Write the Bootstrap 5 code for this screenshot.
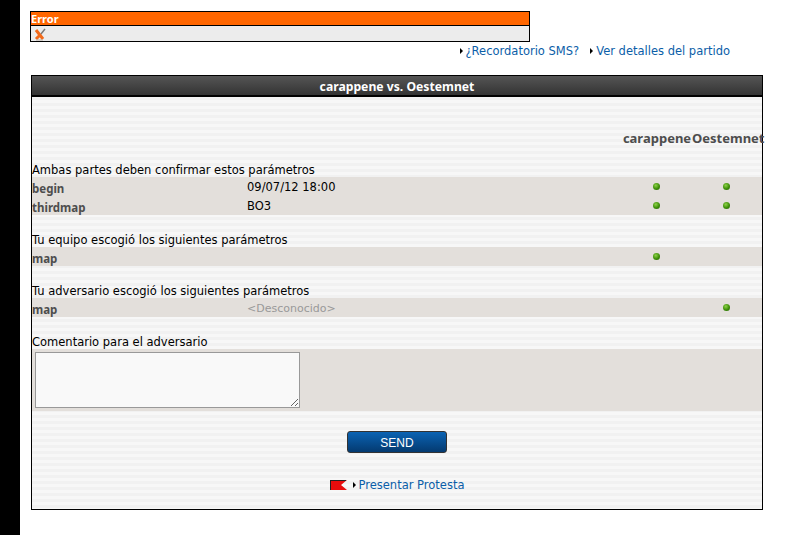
<!DOCTYPE html>
<html lang="es">
<head>
    <meta charset="UTF-8">
    <meta name="viewport" content="width=device-width, initial-scale=1.0">
    <title>carappene vs. Oestemnet</title>
    <link rel="stylesheet" href="https://cdn.jsdelivr.net/npm/bootstrap@5.3.0/dist/css/bootstrap.min.css">
    <style>
        body { background: #fff; font-family: "DejaVu Sans", Verdana, sans-serif; font-size: 11.5px; color: #000; height: 535px; overflow: hidden; }
        a { color: #0b5ea8; text-decoration: none; }
        .side-strip { width: 20px; height: 535px; background: #000; flex: none; }
        .page-body { width: 732px; margin-left: 11px; padding-top: 11px; }
        .err-box { width: 500px; margin-left: -1px; border: 1px solid #000; height: 31px; background: #ececec; }
        .err-head { height: 13px; background: #ff6600; border-bottom: 1px solid #000; box-sizing: content-box; color: #fff; font-family: "Noto Sans", sans-serif; font-weight: 700; font-size: 11px; line-height: 13px; }
        .err-icon { height: 16px; padding-left: 3px; }
        .top-links { height: 33px; padding-right: 33px; font-size: 11.5px; line-height: 18px; gap: 11px; }
        .arrow { display: inline-block; border-left: 3px solid #000; border-top: 3px solid transparent; border-bottom: 3px solid transparent; margin-right: 3px; vertical-align: 1px; }
        .match-box { border: 1px solid #000; height: 435px; background: repeating-linear-gradient(180deg, #f7f7f7 0, #f7f7f7 3px, #f1f1f1 3px, #f1f1f1 6px); }
        .match-title { background: linear-gradient(#555, #333); border-bottom: 2px solid #000; box-sizing: content-box; height: 19px; color: #fff; font-family: "Noto Sans", sans-serif; font-weight: 700; font-size: 12.2px; line-height: 22px; text-align: center; }
        .team-head { height: 63px; align-items: flex-end; color: #4d4d4d; font-family: "Noto Sans", sans-serif; font-weight: 700; font-size: 13px; }
        .team-name { width: 70px; text-align: center; line-height: 18px; padding-bottom: 13px; white-space: nowrap; }
        .sec-label { height: 17px; line-height: 21px; }
        .param-row { height: 19px; background: #e3dfdb; line-height: 18px; }
        .param-name { width: 215px; color: #4d4d4d; font-family: "Noto Sans", sans-serif; font-weight: 700; font-size: 11.5px; padding-top: 3px; }
        .param-val { width: 375px; }
        .param-row .param-val { width: 374px; padding-top: 1px; }
        .param-row .param-val.muted-val { color: #999; font-size: 11px; padding-top: 2px; }
        .dot-cell { width: 70px; }
        .dot { display: block; width: 7px; height: 7px; border-radius: 50%; background: radial-gradient(circle at 40% 35%, #8fd24a, #3d8f08 55%, #25610a); }
        .spacer { height: 15px; }
        .comment-area { height: 62px; background: #e3dfdb; padding: 3px; }
        .comment-area textarea { width: 265px; height: 56px; background: #f9f9f9; border: 1px solid #999; display: block; }
        .send-btn { width: 100px; height: 22px; padding: 2px 0 0; border: 1px solid #333; border-radius: 3px; background: linear-gradient(#0b63b3, #043a70); color: #fff; font-family: "Liberation Sans", Arial, sans-serif; font-size: 12px; line-height: 18px; }
        .send-row { padding-top: 20px; height: 58px; }
        .protest-row { padding-top: 7px; font-size: 11.5px; line-height: 18px; }
        .protest-flag { margin-right: 2px; }
    </style>
</head>
<body class="d-flex">
    <div class="side-strip"></div>
    <div class="page-body">
        <div class="err-box">
            <div class="err-head">Error</div>
            <div class="err-icon">
                <svg width="12" height="13" viewBox="0 0 12 13"><path d="M2 2 L9 11 M2 11 L7 6" stroke="#f26a1b" stroke-width="3" fill="none"/><path d="M7 6 L11 1" stroke="#777" stroke-width="1.4"/><path d="M2 12 H9" stroke="#b9b0a8"/></svg>
            </div>
        </div>
        <div class="top-links d-flex justify-content-end align-items-start">
            <span><i class="arrow"></i><a href="#">¿Recordatorio SMS?</a></span>
            <span><i class="arrow"></i><a href="#">Ver detalles del partido</a></span>
        </div>
        <div class="match-box">
            <div class="match-title">carappene vs. Oestemnet</div>
            <div class="team-head d-flex">
                <div class="param-name"></div>
                <div class="param-val"></div>
                <div class="team-name">carappene</div>
                <div class="team-name">Oestemnet</div>
            </div>
            <div class="sec-label">Ambas partes deben confirmar estos parámetros</div>
            <div class="param-row d-flex">
                <div class="param-name">begin</div>
                <div class="param-val">09/07/12 18:00</div>
                <div class="dot-cell d-flex justify-content-center align-items-center"><span class="dot"></span></div>
                <div class="dot-cell d-flex justify-content-center align-items-center"><span class="dot"></span></div>
            </div>
            <div class="param-row d-flex">
                <div class="param-name">thirdmap</div>
                <div class="param-val">BO3</div>
                <div class="dot-cell d-flex justify-content-center align-items-center"><span class="dot"></span></div>
                <div class="dot-cell d-flex justify-content-center align-items-center"><span class="dot"></span></div>
            </div>
            <div class="spacer"></div>
            <div class="sec-label">Tu equipo escogió los siguientes parámetros</div>
            <div class="param-row d-flex">
                <div class="param-name">map</div>
                <div class="param-val"></div>
                <div class="dot-cell d-flex justify-content-center align-items-center"><span class="dot"></span></div>
                <div class="dot-cell"></div>
            </div>
            <div class="spacer"></div>
            <div class="sec-label">Tu adversario escogió los siguientes parámetros</div>
            <div class="param-row d-flex">
                <div class="param-name">map</div>
                <div class="param-val muted-val">&lt;Desconocido&gt;</div>
                <div class="dot-cell"></div>
                <div class="dot-cell d-flex justify-content-center align-items-center"><span class="dot"></span></div>
            </div>
            <div class="spacer"></div>
            <div class="sec-label">Comentario para el adversario</div>
            <div class="comment-area"><textarea></textarea></div>
            <div class="send-row text-center"><button type="button" class="send-btn">SEND</button></div>
            <div class="protest-row d-flex justify-content-center align-items-center">
                <svg width="17" height="10" viewBox="0 0 17 10" class="protest-flag"><path d="M0 0 H17 L11 5 L17 10 H0 Z" fill="#e80c0c"/><path d="M0 .5 H16" stroke="#222"/><path d="M.5 0 V10" stroke="#222"/></svg>
                <i class="arrow ms-1"></i><a href="#">Presentar Protesta</a>
            </div>
        </div>
    </div>
    <script src="https://cdn.jsdelivr.net/npm/bootstrap@5.3.0/dist/js/bootstrap.bundle.min.js"></script>
</body>
</html>
